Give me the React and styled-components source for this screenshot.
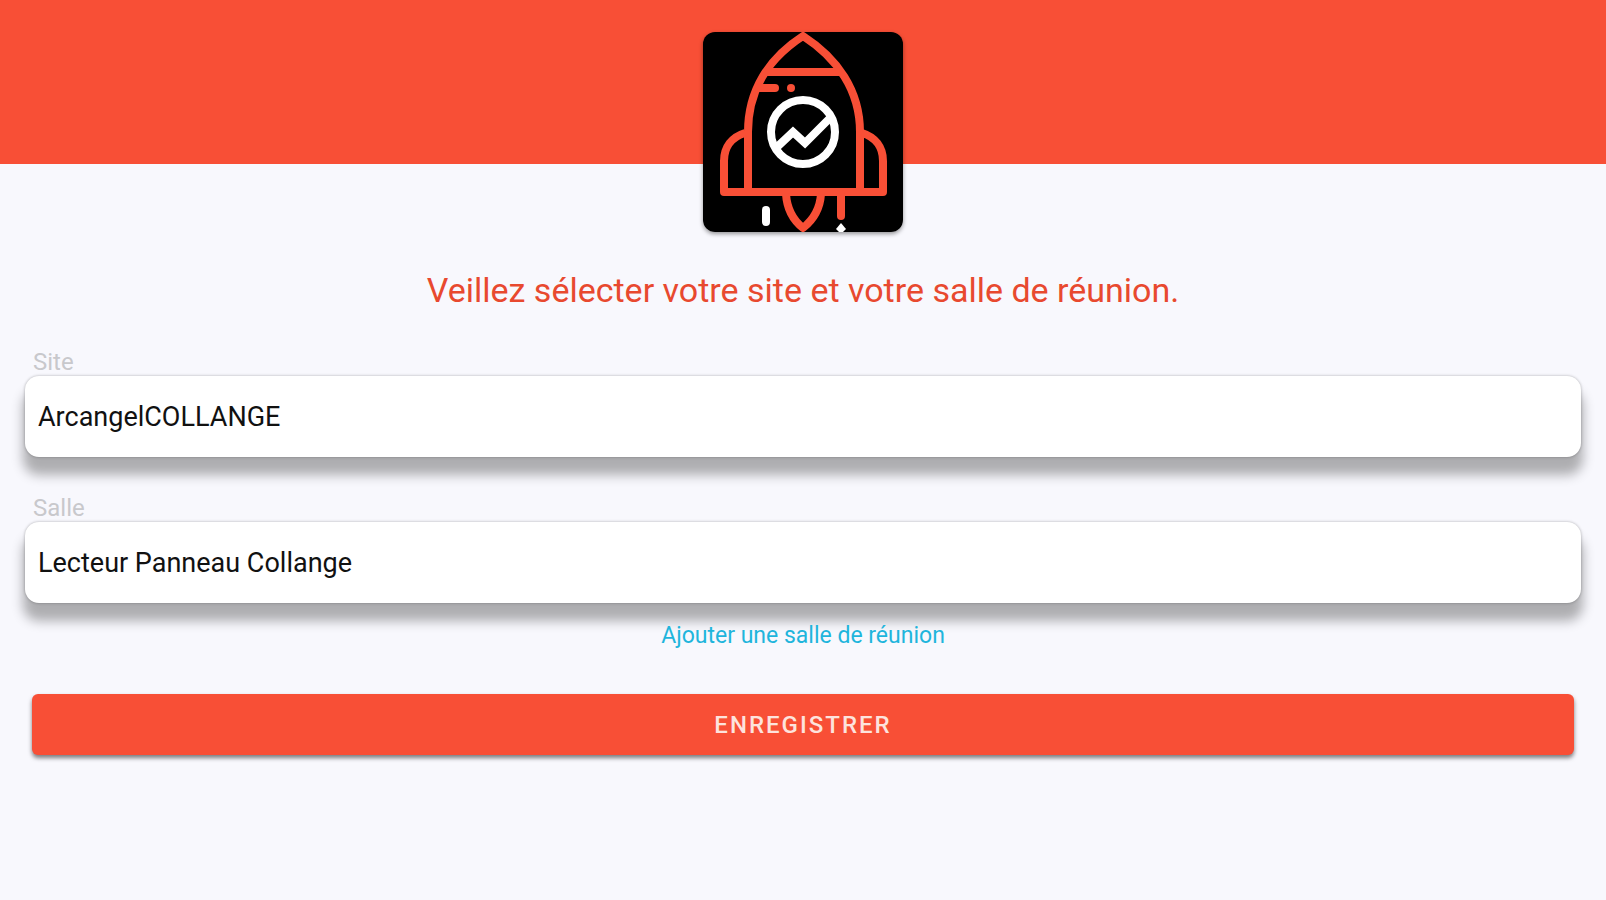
import React from "react";
import styled, { createGlobalStyle } from "styled-components";

const fields = [
  { id: "site", label: "Site", value: "ArcangelCOLLANGE" },
  { id: "salle", label: "Salle", value: "Lecteur Panneau Collange" },
];

const RocketLogo = () => (
  <Logo viewBox="0 0 200 200" role="img" aria-label="Logo">
    <rect width="200" height="200" fill="#000000" />
    <g fill="none" stroke="#f84f36" strokeWidth="8" strokeLinejoin="round">
      {/* body */}
      <path d="M45 160V100C45 58 66 26 100 4C134 26 157 58 157 100V160" />
      <path d="M61 40H139" />
      {/* wings and base */}
      <path d="M42 101C29 105 21 115 21 129V160H180V129C180 115 172 105 159 101" />
      {/* flame */}
      <path d="M83 162C84 178 90 188 100 196C110 188 117 178 118 162" />
      <path d="M56 56H72" strokeLinecap="round" />
      <path d="M138 162V184" strokeLinecap="round" />
    </g>
    <circle cx="88" cy="56" r="4" fill="#f84f36" />
    {/* chart badge */}
    <g fill="none" stroke="#ffffff" strokeWidth="8">
      <circle cx="100" cy="100" r="32" />
      <path d="M73 116L90 100L102 111L128 85" />
      <path d="M63 178V190" strokeLinecap="round" />
    </g>
    <path d="M138 191L143 197L138 202L133 197Z" fill="#ffffff" />
  </Logo>
);

const App = () => {
  return (
    <>
      <GlobalStyle />
      <Header>
        <LogoBox>
          <RocketLogo />
        </LogoBox>
      </Header>
      <Container>
        <Title>Veillez sélecter votre site et votre salle de réunion.</Title>
        <Form onSubmit={(e) => e.preventDefault()}>
          {fields.map((item) => (
            <InputInnerBox key={item.id}>
              <Label htmlFor={item.id}>{item.label}</Label>
              <CustomInput id={item.id} type="text" defaultValue={item.value} />
            </InputInnerBox>
          ))}
          <AddLink href="#salle">Ajouter une salle de réunion</AddLink>
          <SubmitButton type="submit">ENREGISTRER</SubmitButton>
        </Form>
      </Container>
    </>
  );
};

export default App;

const GlobalStyle = createGlobalStyle`
  * {
    box-sizing: border-box;
  }

  body {
    margin: 0;
    background-color: #f8f8fd;
    font-family: Roboto, "Liberation Sans", sans-serif;
  }
`;

const Header = styled.header`
  display: flex;
  justify-content: center;
  height: 164px;
  padding-top: 32px;
  background-color: #f84f36;
`;

const LogoBox = styled.div`
  flex: none;
  width: 200px;
  height: 200px;
  border-radius: 12px;
  overflow: hidden;
  box-shadow: 0 2px 4px rgba(0, 0, 0, 0.4);
`;

const Logo = styled.svg`
  display: block;
  width: 100%;
  height: 100%;
`;

const Container = styled.main`
  padding: 106px 25px 24px;
`;

const Title = styled.h1`
  margin: 0;
  font-size: 34px;
  font-weight: 400;
  line-height: 40px;
  text-align: center;
  color: #e8492f;
`;

const Form = styled.form`
  display: flex;
  flex-direction: column;
  margin-top: 38px;
`;

const InputInnerBox = styled.div`
  display: flex;
  flex-direction: column;
  margin-bottom: 37px;
`;

const Label = styled.label`
  padding-left: 8px;
  font-size: 24px;
  line-height: 28px;
  color: #c8c8cc;
`;

const CustomInput = styled.input`
  width: 100%;
  height: 81px;
  padding: 0 13px;
  border: none;
  border-radius: 14px;
  background-color: #ffffff;
  box-shadow:
    0 0 3px rgba(0, 0, 0, 0.3),
    0 16px 12px 2px rgba(0, 0, 0, 0.3);
  font-family: inherit;
  font-size: 27px;
  color: #111111;

  &:focus {
    outline: none;
  }
`;

/* sits above the shadow of the last field */
const AddLink = styled.a`
  position: relative;
  align-self: center;
  margin-top: -18px;
  font-size: 23px;
  line-height: 28px;
  color: #1fb5dc;
  text-decoration: none;
`;

const SubmitButton = styled.button`
  height: 61px;
  margin: 44px 7px 0;
  border: none;
  border-radius: 6px;
  background-color: #f84f36;
  box-shadow: 0 3px 4px rgba(0, 0, 0, 0.5);
  font-family: inherit;
  font-size: 24px;
  font-weight: 500;
  letter-spacing: 2px;
  color: #fde3dd;
  cursor: pointer;
`;
